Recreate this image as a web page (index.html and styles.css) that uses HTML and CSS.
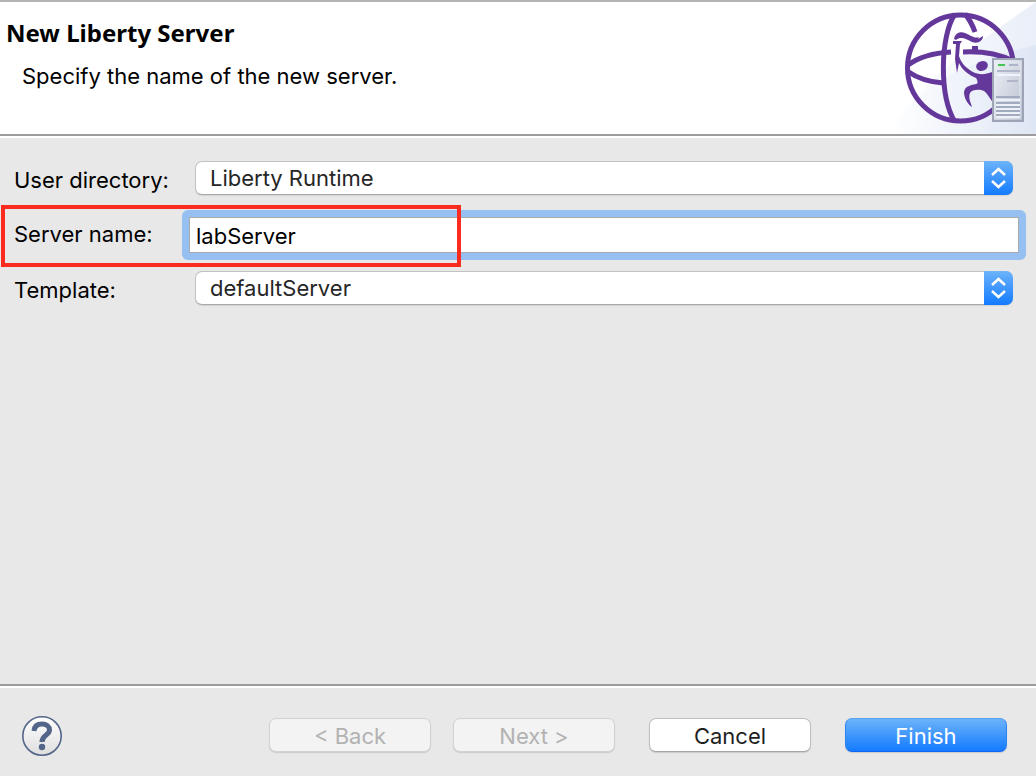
FILE: index.html
```html
<!DOCTYPE html>
<html lang="en">
<head>
<meta charset="utf-8">
<meta name="viewport" content="width=device-width, initial-scale=1">
<title>New Liberty Server</title>
<link rel="stylesheet" href="styles.css">
</head>
<body>
<form class="wizard">
  <header class="banner">
    <div class="banner-text">
      <h1 class="title">New Liberty Server</h1>
      <p class="message">Specify the name of the new server.</p>
    </div>
    <svg class="banner-art" viewBox="0 0 146 132" aria-hidden="true">
      <defs>
        <linearGradient id="wash" x1="0" y1="0" x2="1" y2="0">
          <stop offset="0" stop-color="#fff"/>
          <stop offset="1" stop-color="#dbe4f4"/>
        </linearGradient>
        <linearGradient id="case" x1="0" y1="0" x2="1" y2="1">
          <stop offset="0" stop-color="#edf0f5"/>
          <stop offset="1" stop-color="#b8bfd0"/>
        </linearGradient>
      </defs>
      <path d="M146 0V132H0C18 90 70 52 146 0Z" fill="url(#wash)" opacity=".6"/>
      <path d="M0 132C20 88 76 59 146 43V132Z" fill="url(#wash)" opacity=".8"/>
      <g fill="none" stroke="#64379b" stroke-width="5">
        <circle cx="70.500" cy="66" r="53"/>
        <path d="M65 12C50 34 49 94 65 120"/>
        <path d="M18 63C29 55 43 51 61 50"/>
        <path d="M17 69C27 76 39 80 53 81"/>
        <path d="M73 50C93 49 109 52 123 59"/>
        <path d="M75 12Q81 19 85 30"/>
      </g>
      <g fill="#64379b">
        <path d="M64 37C65 31 70 29 75 31C81 33 84 37 89 35L88 37L93 34C93 39 88 42 82 40C76 37 71 34 66 38Z"/>
        <path d="M63 39H72L70 42L69 54C71 61 76 66 83 70C89 73 96 73 104 69V101C101 99 98 92 94 89C90 87 82 87 80 91C78 96 81 101 82 105C77 102 74 95 74 90C75 84 81 83 86 82C88 82 88 79 86 76C79 73 72 68 69 61L67 71L65 57L66 42H63Z"/>
        <path d="M82 44H88V49H82Z"/>
        <ellipse cx="92" cy="64" rx="6" ry="4.800" transform="rotate(-20 92 64)"/>
      </g>
      <path d="M103 57H133V119H103Z" fill="url(#case)" stroke="#9da4b6" stroke-width="2"/>
      <path d="M105 60H130V116H105Z" fill="none" stroke="#e5e9f1"/>
      <path d="M108 63H115" stroke="#43c453" stroke-width="2"/>
      <path d="M119 63H128M107 69H130M117 79H128" stroke="#b0b7ca" stroke-width="2"/>
      <path d="M107 73H130" stroke="#eef4fb" stroke-width="2"/>
      <path d="M106 95H130M106 101H130M106 105H130M106 109H130M106 113H130" stroke="#a2aac0" stroke-width="2"/>
      <path d="M106 98H130M106 103H130M106 107H130M106 111H130M106 115H130" stroke="#edf1f7" stroke-width="2"/>
    </svg>
  </header>

  <main class="fields">
    <div class="field">
      <label class="label" for="user-dir">User directory:</label>
      <div class="picker">
        <select class="select" id="user-dir"><option>Liberty Runtime</option></select>
        <svg class="arrows" viewBox="0 0 29 34" aria-hidden="true"><path d="M8 14L14.500 8L21 14M8 20L14.500 26L21 20"/></svg>
      </div>
    </div>
    <div class="field field-marked">
      <label class="label" for="server-name">Server name:</label>
      <div class="focus-ring">
        <input class="input" id="server-name" type="text" value="labServer">
      </div>
      <span class="marker"></span>
    </div>
    <div class="field">
      <label class="label" for="template">Template:</label>
      <div class="picker">
        <select class="select" id="template"><option>defaultServer</option></select>
        <svg class="arrows" viewBox="0 0 29 34" aria-hidden="true"><path d="M8 14L14.500 8L21 14M8 20L14.500 26L21 20"/></svg>
      </div>
    </div>
  </main>

  <footer class="footer">
    <button class="help" type="button" aria-label="Help">
      <svg class="help-icon" viewBox="0 0 40 40" aria-hidden="true">
        <defs><linearGradient id="help-fill" x1="0" y1="0" x2="0" y2="1"><stop offset="0" stop-color="#fff"/><stop offset="1" stop-color="#dedede"/></linearGradient></defs>
        <circle cx="20" cy="20" r="19.200" fill="url(#help-fill)" stroke="#53668a" stroke-width="1.600"/>
        <path d="M12 15C12.500 9.500 15.500 8 20 8C24.500 8 27.500 10.500 27.500 14C27.500 19.500 20 18.500 20 26" fill="none" stroke="#53668a" stroke-width="5"/>
        <circle cx="20" cy="31" r="3.200" fill="#53668a"/>
      </svg>
    </button>
    <div class="actions">
      <div class="paging">
        <button class="button" type="button" disabled>&lt; Back</button>
        <button class="button" type="button" disabled>Next &gt;</button>
      </div>
      <button class="button" type="button">Cancel</button>
      <button class="button button-primary" type="submit">Finish</button>
    </div>
  </footer>
</form>
</body>
</html>
```

FILE: styles.css
```css
* {
  box-sizing: border-box;
}

body {
  margin: 0;
  background: #e8e8e8;
  color: #000;
  font: 22px/28px Inter, "Liberation Sans", sans-serif;
}

.wizard {
  display: flex;
  flex-direction: column;
  min-height: 100vh;
}

.banner {
  display: flex;
  justify-content: space-between;
  background: #fff;
  border-top: 2px solid #b4b4b4;
  border-bottom: 2px solid #9c9c9c;
  box-shadow: 0 2px #fff;
}

.banner-text {
  padding: 15px 0 0 6px;
}

.title {
  margin: 0;
  font: bold 24px/32px "Noto Sans", sans-serif;
}

.message {
  margin: 13px 0 0 16px;
}

.banner-art {
  display: block;
  flex: none;
  width: 146px;
  height: 132px;
}

.fields {
  display: flex;
  flex: 1;
  flex-direction: column;
  gap: 20px;
  padding: 25px 17px 24px 14px;
}

.field {
  position: relative;
  display: grid;
  grid-template-columns: 175px 1fr;
  align-items: center;
}

.label {
  padding-top: 4px;
}

.field-marked {
  padding-top: 2px;
  margin-bottom: -2px;
}

.field-marked .label {
  padding: 0 0 2px;
}

.picker {
  position: relative;
  margin: 0 6px;
}

.select {
  display: block;
  width: 100%;
  height: 34px;
  padding: 0 40px 0 14px;
  appearance: none;
  background: #fff;
  border: 1px solid #c2c2c2;
  border-bottom-color: #a9a9a9;
  border-radius: 7px;
  box-shadow: 0 1px 1px #00000018;
  color: #262626;
  font: inherit;
}

.arrows {
  position: absolute;
  top: 0;
  right: 0;
  width: 29px;
  height: 34px;
  background: linear-gradient(#6cb3fa, #147bff);
  border-radius: 0 7px 7px 0;
  fill: none;
  stroke: #fff;
  stroke-width: 2.5;
  pointer-events: none;
}

.focus-ring {
  margin: -7px;
  padding: 7px;
  background: #95c0f1;
  border-radius: 6px;
}

.input {
  display: block;
  width: 100%;
  height: 36px;
  padding: 2px 6px 0;
  background: #fff;
  border: 1px solid #aaa;
  border-radius: 0;
  outline: 0;
  color: #000;
  font: inherit;
}

.marker {
  position: absolute;
  top: -10px;
  left: -13px;
  width: 460px;
  height: 62px;
  border: 4px solid #fc2b1f;
  pointer-events: none;
}

.footer {
  display: flex;
  align-items: center;
  justify-content: space-between;
  padding: 30px 29px 20px 22px;
  border-top: 2px solid #9c9c9c;
  box-shadow: inset 0 2px #fff;
}

.help {
  padding: 0;
  background: none;
  border: 0;
}

.help-icon {
  display: block;
  width: 40px;
  height: 40px;
}

.actions {
  display: flex;
  gap: 34px;
  padding-bottom: 2px;
}

.paging {
  display: flex;
  gap: 22px;
}

.button {
  width: 162px;
  height: 34px;
  padding: 2px 0 0;
  background: #fff;
  border: 1px solid #bebebe;
  border-bottom-color: #a6a6a6;
  border-radius: 7px;
  box-shadow: 0 1px 1px #00000020;
  color: #1e1e1e;
  font: inherit;
}

.button:disabled {
  background: #f3f3f3;
  border-color: #d2d2d2;
  color: #b2b2b2;
}

.button-primary {
  background: linear-gradient(#6cb3fa, #147bff);
  border-color: #55a3f2 #2c83f3 #0e62f5;
  color: #fff;
}
```
